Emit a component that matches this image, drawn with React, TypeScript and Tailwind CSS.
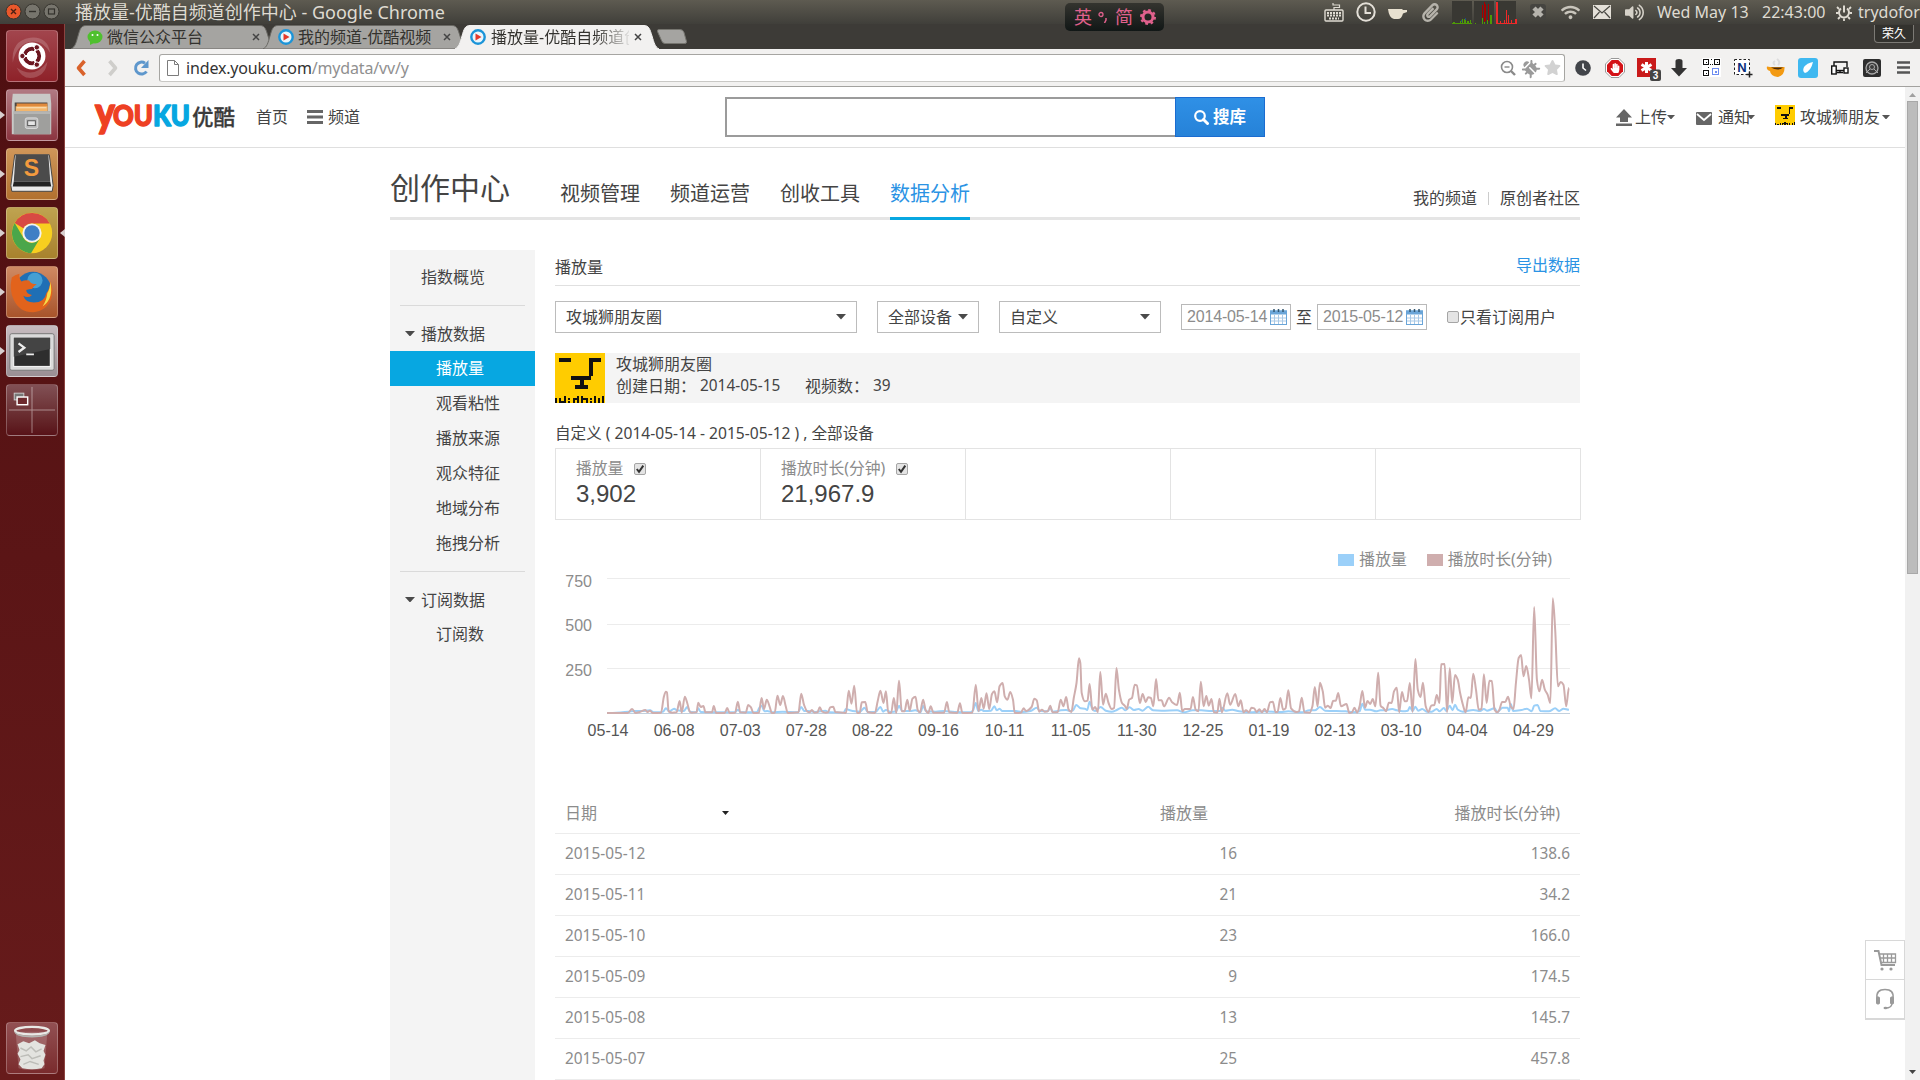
import React from 'react';
import { FaStar, FaBug, FaHandPaper, FaWifi, FaVolumeUp, FaPaperclip } from 'react-icons/fa';

/* ---------- chart data ---------- */

// Flat [x, height] pairs in one-third pixel heights, measured from the axis origin.
const MINUTES_FIRST = [
  195,0,255,0,268,12,278,0,290,3,306,9,313,3,320,7,328,0,352,1,360,48,366,64,369,62,374,5,385,1,397,2,406,36,412,1,421,49,428,30,435,5,440,1,455,2,460,31,467,18,475,21,481,2,500,2,505,21,512,0,537,0,544,15,551,0,567,1,575,34,582,2,598,1,605,24,613,17,620,0,636,1,644,45,651,12,659,40,667,20,674,0,682,1,690,52,698,24,706,51,714,20,720,0,751,2,759,58,767,25,777,4,783,2,790,9,797,1,806,2,813,17,820,4,830,1,837,2,843,17,852,19,858,3,880,1,889,0,897,67,905,28,913,82,921,0,929,1,935,32,945,33,952,3,973,0,981,35,989,67,998,30,1005,65,1012,0,1020,0,1028,45,1035,0,1043,97,1051,5,1059,5,1067,40,1074,7,1082,43,1091,49,1097,10,1104,2,1113,40,1120,10,1128,0,1135,20,1143,1,1174,1,1182,33,1189,2,1212,0,1220,29,1227,0,1256,1,1266,85,1274,5,1282,45,1289,13,1297,59,1305,12,1313,57,1320,65,1328,32,1335,80,1344,90,1350,50,1358,40,1366,63,1374,40,1379,0,1397,1,1405,14,1412,6,1428,18,1436,43,1443,38,1450,4,1458,10,1466,4,1475,5,1482,22,1489,2,1504,3,
];
const MINUTES_LAST = [
  2,40,10,20,18,48,25,10,33,3,40,45,48,90,55,164,59,150,63,60,72,35,80,37,86,87,94,10,102,18,110,2,117,123,125,25,133,58,141,30,150,12,157,15,164,135,171,70,180,30,188,22,194,12,201,40,209,45,217,85,223,83,232,30,240,57,249,33,256,47,264,45,271,20,279,102,286,38,295,38,302,20,317,46,325,33,340,24,348,61,355,5,362,12,379,12,386,48,394,10,402,5,409,94,417,20,425,51,432,22,440,42,447,2,457,1,463,43,470,2,486,59,494,25,509,57,518,20,525,38,533,2,540,8,549,2,556,16,564,14,571,3,579,11,586,2,594,12,601,2,610,32,618,34,626,3,632,4,640,45,648,10,655,14,663,68,671,14,686,3,694,5,702,46,710,2,725,1,733,20,740,78,748,20,755,91,763,65,770,16,778,22,786,15,793,36,801,37,808,60,816,20,832,27,840,0,848,2,855,16,863,1,870,20,878,66,886,16,893,36,901,27,908,42,916,20,924,121,931,22,940,14,947,5,955,31,963,30,970,65,978,76,985,2,993,63,1001,35,1008,36,1016,90,1024,3,1032,162,1039,70,1047,48,1054,91,1062,20,1070,3,1078,22,1087,24,1094,54,1102,30,1107,146,1117,147,1124,2,1132,134,1139,30,1147,114,1155,100,1162,60,1170,25,1178,2,1186,47,1193,45,1200,118,1208,70,1216,10,1224,12,1231,116,1239,30,1247,97,1254,96,1262,10,1270,2,1276,10,1284,33,1293,33,1301,49,1309,20,1317,12,1324,90,1332,165,1339,174,1346,110,1354,141,1362,100,1369,44,1377,318,1385,100,1392,65,1400,100,1408,70,1416,55,1424,30,1431,344,1438,250,1446,80,1454,93,1462,85,1470,20,1478,76,
];
const PLAYS_FIRST = [
  195,0,240,2,260,4,275,6,295,6,320,8,330,2,350,2,358,4,366,14,376,5,390,13,398,8,418,6,428,18,436,4,454,2,460,14,467,3,500,2,567,2,575,10,583,2,630,2,637,15,644,22,652,5,660,6,675,2,705,4,750,2,759,18,768,6,780,6,800,3,829,7,840,2,882,1,889,12,900,8,915,5,930,4,943,16,952,3,975,3,989,18,997,4,1005,9,1020,3,1035,5,1043,22,1052,6,1075,6,1090,8,1106,3,1113,22,1121,5,1150,4,1174,6,1205,3,1250,2,1258,8,1266,30,1273,6,1282,10,1290,6,1310,7,1320,20,1327,8,1335,13,1343,6,1380,6,1400,3,1425,6,1443,16,1452,6,1475,5,1482,16,1489,4,1504,6,
];
const PLAYS_LAST = [
  2,8,18,9,30,6,38,8,47,24,60,14,72,13,79,9,86,34,94,12,102,6,118,18,133,7,150,4,165,9,180,16,190,8,202,17,215,9,228,12,240,7,256,19,270,8,295,7,340,8,360,2,385,8,410,8,440,6,465,6,471,16,480,7,500,10,520,5,560,2,594,5,640,3,663,5,700,2,725,8,740,8,755,18,770,7,830,5,850,2,870,5,878,28,886,10,900,10,918,5,930,8,940,8,965,12,978,8,995,5,1010,7,1016,18,1024,6,1032,19,1040,7,1052,12,1065,4,1080,4,1094,12,1102,5,1115,15,1122,6,1132,22,1140,8,1147,25,1155,10,1170,4,1200,9,1220,6,1231,12,1240,7,1262,14,1270,3,1285,16,1300,16,1304,5,1309,27,1316,6,1340,9,1356,13,1370,5,1377,22,1387,24,1395,6,1420,5,1438,14,1450,6,1462,13,1478,10,
];

const BASELINE = 136;

function curve(first: number[], last: number[]): string {
  const pts: [number, number][] = [];
  for (let i = 0; i < first.length; i += 2) pts.push([(first[i] - 195) / 2.904, BASELINE - first[i + 1] / 3]);
  for (let i = 0; i < last.length; i += 2) pts.push([(last[i] + 1315.5) / 2.904, BASELINE - last[i + 1] / 3]);
  const slope = pts.map((p, i) => {
    if (i === 0 || i === pts.length - 1) return 0;
    const a = (p[1] - pts[i - 1][1]) / (p[0] - pts[i - 1][0]);
    const b = (pts[i + 1][1] - p[1]) / (pts[i + 1][0] - p[0]);
    return a * b <= 0 ? 0 : (2 * a * b) / (a + b);
  });
  let d = `M${pts[0][0]},${pts[0][1]}`;
  for (let i = 1; i < pts.length; i++) {
    const [x0, y0] = pts[i - 1];
    const [x1, y1] = pts[i];
    const h = (x1 - x0) / 3;
    d += `C${(x0 + h).toFixed(2)},${(y0 + slope[i - 1] * h).toFixed(2)} ${(x1 - h).toFixed(2)},${(y1 - slope[i] * h).toFixed(2)} ${x1.toFixed(2)},${y1.toFixed(2)}`;
  }
  return d;
}

const DAYS = ['05-14','06-08','07-03','07-28','08-22','09-16','10-11','11-05','11-30','12-25','01-19','02-13','03-10','04-04','04-29'];

const ROWS = [
  ['2015-05-12', '16', '138.6'],
  ['2015-05-11', '21', '34.2'],
  ['2015-05-10', '23', '166.0'],
  ['2015-05-09', '9', '174.5'],
  ['2015-05-08', '13', '145.7'],
  ['2015-05-07', '25', '457.8'],
];

/* ---------- small shared pieces ---------- */

function Caret({ w = 10, color = '#4a4a4a' }: { w?: number; color?: string }) {
  return (
    <svg width={w} height={w / 2 + 0.5} viewBox="0 0 10 5.5" className="shrink-0">
      <path d="M0 0h10L5 5.5z" fill={color} />
    </svg>
  );
}

function Avatar({ size }: { size: number }) {
  return (
    <svg width={size} height={size} viewBox="0 0 50 50" className="shrink-0" shapeRendering="crispEdges">
      <rect width="50" height="50" fill="#ffcc00" />
      <path d="M4 5h12v4H4zM34 5h12v4h-8v14h-2v4h-7v5h4v4H20v-4h5v-5h-9v-4h18z" fill="#111" />
      <path d="M0 45h2v5H0zM4 45h2v5H4zM6 48h3v2H6zM9 43h2v7H9zM13 45h2v2h-2zM13 48h2v2h-2zM18 45h5v2h-5zM18 45h2v5h-2zM22 43h2v7h-2zM26 43h2v7h-2zM28 45h4v2h-4zM31 45h2v5h-2zM35 45h2v2h-2zM35 48h2v2h-2zM39 43h2v7h-2zM43 45h2v5h-2zM47 43h2v7h-2z" fill="#111" />
    </svg>
  );
}

function Check({ on }: { on?: boolean }) {
  return (
    <svg width="12" height="12" viewBox="0 0 12 12" className="shrink-0">
      <rect x=".5" y=".5" width="11" height="11" rx="1.5" fill="#e4e4e4" stroke="#a5a5a5" />
      {on && <path d="M2.8 6l2.2 2.8L9.3 2.6" stroke="#333" strokeWidth="2" fill="none" />}
    </svg>
  );
}

function Calendar() {
  return (
    <svg width="17" height="16" viewBox="0 0 17 16" className="shrink-0">
      <rect x=".5" y="2" width="16" height="13.5" fill="#fff" stroke="#6aa5d8" />
      <rect x="0" y="1.5" width="17" height="4" fill="#6aa5d8" />
      <path d="M4.5 6v9M8.5 6v9M12.5 6v9M1 9h15M1 12h15" stroke="#a9c9e6" />
      <path d="M4 0v3M8.500 0v3M13 0v3" stroke="#33566f" strokeWidth="1.5" />
    </svg>
  );
}

/* ---------- desktop panel ---------- */

function TrayIcon({ children }: { children: React.ReactNode }) {
  return <span className="flex h-6 w-8 shrink-0 items-center justify-center text-[#dfdbd2]">{children}</span>;
}

function Panel() {
  return (
    <div className="flex h-6 w-full items-center bg-linear-to-b from-[#5e5b51] to-[#403f3a]">
      <svg width="64" height="24" viewBox="0 0 64 24" className="shrink-0">
        <circle cx="13.500" cy="11.500" r="7.500" fill="#e9582b" stroke="#37322c" />
        <path d="M11 9l5 5M16 9l-5 5" stroke="#4a2013" strokeWidth="1.4" />
        <circle cx="32.500" cy="11.500" r="7.500" fill="#77756d" stroke="#37352f" />
        <path d="M29 11.500h7" stroke="#33312c" strokeWidth="1.4" />
        <circle cx="51.500" cy="11.500" r="7.500" fill="#77756d" stroke="#37352f" />
        <rect x="48.500" y="9" width="6" height="5" fill="none" stroke="#33312c" strokeWidth="1.2" />
      </svg>
      <span className="ml-[11px] whitespace-nowrap text-[18px] leading-6 text-[#dfdbd2]">播放量-优酷自频道创作中心 - Google Chrome</span>
      <div className="ml-auto flex h-6 items-center">
        <TrayIcon>
          <svg width="20" height="20" viewBox="0 0 20 20" fill="none" stroke="#dfdbd2">
            <rect x="1" y="8" width="18" height="11" rx="1" strokeWidth="1.4" />
            <path d="M10 8V5.500h5.500V3H9V1" strokeWidth="1.2" />
            <path d="M3 11h14M3 13.500h14M5 16.500h10" strokeDasharray="2 1" strokeWidth="1.800" />
          </svg>
        </TrayIcon>
        <TrayIcon>
          <svg width="20" height="20" viewBox="0 0 20 20" fill="none" stroke="#e4e0d8" strokeWidth="2">
            <circle cx="10" cy="10" r="8.700" />
            <path d="M9.500 4.500V11H15" />
          </svg>
        </TrayIcon>
        <TrayIcon>
          <svg width="20" height="14" viewBox="0 0 20 14" className="mt-1">
            <path d="M0 2h14.500v1H19v2l-4 1.500Q13.500 12 10 12H6Q1 11 0 2z" fill="#e8e1d0" />
          </svg>
        </TrayIcon>
        <TrayIcon><FaPaperclip size={19} className="text-[#b6b3ab]" /></TrayIcon>
        <svg width="66" height="23" viewBox="0 0 66 23" className="ml-[6px] shrink-0" shapeRendering="crispEdges">
          <path d="M0 0h20v23H0zM22 0h20v23H22zM44 0h20v23H44z" fill="#393833" />
          <path d="M0 22h20v1H0zM1 21h2v1H1zM8 20h1v3H8zM10 18h1v5h-1zM12 18h2v5h-2zM15 20h2v3h-2zM18 19h1v4h-1z" fill="#4e9a06" />
          <path d="M9 19h1v2H9zM13 17h1v2h-1z" fill="#204a87" />
          <path d="M23 22h1v1h-1zM30 17h1v6h-1zM32 9h1v14h-1zM35 19h1v4h-1zM38 14h2v9h-2z" fill="#4e9a06" />
          <path d="M30 4h1v13h-1zM32 1h1v20h-1zM33 3h1v17h-1zM36 3h1v17h-1z" fill="#a40000" />
          <path d="M44 1h2v22h-2zM48 20h1v3h-1zM52 19h1v4h-1zM54 9h1v14h-1zM56 14h1v9h-1zM59 19h1v4h-1zM63 18h2v5h-2zM44 22h20v1H44z" fill="#ef2929" />
        </svg>
        <span className="w-1" />
        <TrayIcon>
          <svg width="16" height="16" viewBox="0 0 16 16">
            <rect width="16" height="16" rx="3" fill="#454440" />
            <path d="M4 4l8 8M12 4l-8 8" stroke="#b5b3ad" strokeWidth="4.500" />
          </svg>
        </TrayIcon>
        <TrayIcon><FaWifi size={19} className="text-[#c9c5bc]" /></TrayIcon>
        <TrayIcon>
          <svg width="18" height="14" viewBox="0 0 18 14">
            <rect width="18" height="14" fill="#e4e0d8" />
            <path d="M1 1l8 7 8-7M1 13l5.500-6M17 13l-5.500-6" stroke="#4a4943" strokeWidth="1.200" fill="none" />
          </svg>
        </TrayIcon>
        <TrayIcon><FaVolumeUp size={19} className="text-[#d5d1c8]" /></TrayIcon>
        <span className="ml-[7px] w-[105px] whitespace-nowrap text-[16px] leading-6 text-[#dfdbd2]">Wed May 13</span>
        <span className="w-[74px] text-[16px] leading-6 text-[#dfdbd2]">22:43:00</span>
        <svg width="16" height="17" viewBox="0 0 16 17" fill="none" stroke="#dfdbd2" className="shrink-0">
          <path d="M5 4.500a5 5 0 1 0 6 0M8 1.500v7" strokeWidth="2" />
          <path d="M1 3l2 2M15 3l-2 2M0 9h2.500M13.500 9H16M2 15l2-2M14 15l-2-2M8 14.500V17" strokeWidth="1.800" />
        </svg>
        <span className="ml-[6px] w-[62px] text-[16px] leading-6 text-[#dfdbd2]">trydofor</span>
      </div>
    </div>
  );
}

/* ---------- launcher ---------- */

function Tile({ color, running, focused, children }: { color: string; running?: boolean; focused?: boolean; children: React.ReactNode }) {
  return (
    <div className="flex h-[52px] w-[65px] shrink-0 items-center justify-between">
      <svg width="5" height="10" viewBox="0 0 5 10">{running && <path d="M0 1l5 4-5 4z" fill="#d8cfcf" />}</svg>
      <div className={`flex size-[52px] items-center justify-center overflow-hidden rounded-[4px] border border-white/25 ${color}`}>{children}</div>
      <svg width="6" height="10" viewBox="0 0 6 10">{focused && <path d="M6 1L1 5l5 4z" fill="#d8cfcf" />}</svg>
    </div>
  );
}

function Launcher() {
  return (
    <div className="flex w-[65px] shrink-0 flex-col gap-[7px] border-r border-[#8c4340] bg-linear-to-b from-[#4f0f11] to-[#671b1b] pt-[6px] pb-[6px]">
      <Tile color="bg-linear-to-b from-[#a2454d] to-[#8e2129]">
        <svg width="52" height="52" viewBox="0 0 52 52">
          <path d="M6 33Q4 10 24 7q18-2 21 16-7-13-19-12Q10 13 6 33zM10 38q18 13 32-6-2 16-18 17-9 0-14-11z" fill="#fff" opacity=".18" />
          <circle cx="26" cy="26" r="14" fill="#fff" />
          <circle cx="26" cy="26" r="7.500" fill="none" stroke="#6b1620" strokeWidth="4" />
          <path d="M26 26L15 26M26 26l5.500-9.500M26 26l5.500 9.500" stroke="#fff" strokeWidth="2" />
          <circle cx="26" cy="26" r="5.500" fill="#fff" />
          <g fill="#6b1620" stroke="#fff" strokeWidth="1"><circle cx="16" cy="26" r="2.800" /><circle cx="31" cy="17" r="2.800" /><circle cx="31" cy="35" r="2.800" /></g>
        </svg>
      </Tile>
      <Tile color="bg-linear-to-b from-[#b17a83] to-[#8b3440]" running>
        <svg width="52" height="52" viewBox="0 0 52 52">
          <path d="M6 4h39l1 10v32H5V14z" fill="#c9c9c7" />
          <rect x="8" y="13" width="34" height="10" fill="#4c4743" />
          <path d="M10 14h32v9H10z" fill="#e08a3c" /><path d="M9 17h33v6H9z" fill="#f3b66c" /><path d="M10 18h31v1H10z" fill="#fbe5c0" />
          <path d="M7 22h38v24H7z" fill="#9f9f9d" /><path d="M7 22h38v3H7z" fill="#b5b5b3" />
          <rect x="19" y="29" width="13" height="11" rx="2" fill="#bbb" stroke="#ddd" />
          <rect x="21.500" y="32" width="8" height="5" fill="#e6e6e6" stroke="#555" />
        </svg>
      </Tile>
      <Tile color="bg-linear-to-b from-[#cf9659] to-[#b2712f]" running>
        <svg width="52" height="52" viewBox="0 0 52 52">
          <path d="M8 6h36l4 32-1 6H5l-1-6z" fill="#e9e9e9" stroke="#444" strokeWidth="1" />
          <path d="M9 6h34l2 28H7z" fill="#4b4b4b" /><path d="M7 34h38l1 5H6z" fill="#222" />
          <text x="25.500" y="28" textAnchor="middle" fontFamily="Liberation Sans" fontWeight="700" fontSize="24" fill="#f39a3e">S</text>
        </svg>
      </Tile>
      <Tile color="bg-linear-to-b from-[#bfa350] to-[#a8822d]" running focused>
        <svg width="52" height="52" viewBox="0 0 52 52">
          <circle cx="26" cy="26" r="21" fill="#f7cf1f" />
          <path d="M8 15.500A21 21 0 0 1 44.500 16H26a10 10 0 0 0-9 5z" fill="#d84a43" />
          <path d="M8 15.500A21 21 0 0 0 25 47l9.200-15.200a10 10 0 0 1-17 -.5z" fill="#4ba64a" />
          <circle cx="26" cy="26" r="10" fill="#f2f2f2" /><circle cx="26" cy="26" r="8" fill="#3f7fc5" />
        </svg>
      </Tile>
      <Tile color="bg-linear-to-b from-[#cf8a63] to-[#a8542b]" running>
        <svg width="52" height="52" viewBox="0 0 52 52">
          <circle cx="27" cy="24" r="19" fill="#1f6fb5" /><circle cx="29" cy="14" r="8" fill="#55b4e0" opacity=".7" />
          <path d="M5 11q-3 13 2 23 6 13 20 13 14-1 19-14 3-9-1-18-1 9-4 12-2 10-13 10-9 0-11-7 5 3 9-1-6-1-6-5 3-1 6-1 1-3 5-5-6 0-8-4-4-1-8 1-3-4-2-8-5 1-8 4z" fill="#e2631c" />
          <path d="M45 15q4 18-8 26 4-6 5-14 3-5 3-12z" fill="#f6dc4a" />
        </svg>
      </Tile>
      <Tile color="bg-linear-to-b from-[#c7bcc0] to-[#9a8f94]" running>
        <svg width="52" height="52" viewBox="0 0 52 52">
          <rect x="3" y="8" width="46" height="38" rx="2" fill="#dadada" stroke="#777" />
          <rect x="7" y="12" width="38" height="30" fill="#2e2e2e" stroke="#fff" strokeWidth="1" />
          <path d="M7 12h38v12L7 32z" fill="#444" />
          <path d="M12 18l6 4.500-6 4.500" fill="none" stroke="#eee" strokeWidth="2.400" /><path d="M20 29.500h8" stroke="#eee" strokeWidth="2" />
        </svg>
      </Tile>
      <Tile color="bg-linear-to-b from-[#815055] to-[#581218]">
        <svg width="52" height="52" viewBox="0 0 52 52">
          <path d="M26 2v48M2 26h48" stroke="#fff" opacity=".45" />
          <rect x="7.500" y="8.500" width="10" height="7" fill="#777" stroke="#ccc" /><rect x="10.500" y="12.500" width="11" height="8" fill="#6d2a2e" stroke="#fff" strokeWidth="1.500" />
        </svg>
      </Tile>
      <div className="mt-auto">
        <Tile color="bg-linear-to-b from-[#925053] to-[#7a2b2d]">
          <svg width="52" height="52" viewBox="0 0 52 52">
            <path d="M9 9l3 38q13 4 27 0l3-38z" fill="#fff" opacity=".18" />
            <path d="M11 22l6-3 6 2 6-3 5 3 6 2-2 6 2 4-2 6 1 4-3 4q-10 2-20 0l-4-4 2-5-3-6 2-4z" fill="#e3e3df" />
            <path d="M14 26l6 3 5-4 5 5 6-3M14 35l8-2 4 4 9-3M17 43l7-3 9 3" stroke="#bdbdb8" strokeWidth="1.500" fill="none" />
            <ellipse cx="26" cy="8" rx="17.500" ry="4" fill="none" stroke="#e9e9e6" strokeWidth="2.500" />
            <path d="M8 8q1 5 18 5t18-5v2q-2 5-18 5T8 10z" fill="#b4b4b0" />
          </svg>
        </Tile>
      </div>
    </div>
  );
}

/* ---------- browser chrome ---------- */

function YoukuMark() {
  return (
    <svg width="16" height="16" viewBox="0 0 16 16" className="shrink-0">
      <circle cx="8" cy="8" r="6.700" fill="#e9f6fc" stroke="#1b94d8" strokeWidth="2.400" />
      <path d="M5.500 4.500l6 3.500-6 3.500z" fill="#e5392b" />
    </svg>
  );
}

function TabShape({ fill, stroke }: { fill: string; stroke: string }) {
  return (
    <svg width="204" height="24" viewBox="0 0 204 24" className="absolute top-0 left-0">
      <path d="M0 24C4 22 5 18 7 11S10 .5 15 .5H189c5 0 6 4 8 10.500S200 22 204 24z" fill={fill} stroke={stroke} />
    </svg>
  );
}

function CloseX() {
  return <svg width="8" height="8" viewBox="0 0 8 8" className="shrink-0"><path d="M1 1l6 6M7 1L1 7" stroke="#444" strokeWidth="1.500" /></svg>;
}

function TabStrip() {
  return (
    <div className="flex h-[25px] items-end bg-[#3d3b37] pl-[6px]">
      <div className="relative flex h-6 w-[192px] shrink-0 items-center pl-[16px]">
        <TabShape fill="#a5a4a1" stroke="#6a6964" />
        <svg width="16" height="15" viewBox="0 0 16 15" className="relative shrink-0">
          <ellipse cx="8" cy="7" rx="7.500" ry="6.500" fill="#4fc02e" /><path d="M3 11l0 4 4-2z" fill="#4fc02e" />
          <circle cx="5.500" cy="5" r="1" fill="#fff" /><circle cx="10.500" cy="5" r="1" fill="#fff" />
        </svg>
        <span className="relative ml-[4px] w-[145px] text-[16px] leading-6 text-[#33322e]">微信公众平台</span>
        <span className="relative"><CloseX /></span>
      </div>
      <div className="relative flex h-6 w-[192px] shrink-0 items-center pl-[15px]">
        <TabShape fill="#a5a4a1" stroke="#6a6964" />
        <span className="relative"><YoukuMark /></span>
        <span className="relative ml-[4px] w-[145px] whitespace-nowrap text-[16px] leading-6 text-[#33322e]">我的频道-优酷视频</span>
        <span className="relative"><CloseX /></span>
      </div>
      <div className="relative flex h-6 w-[202px] shrink-0 items-center pl-[15px]">
        <TabShape fill="#f2f1f0" stroke="#f2f1f0" />
        <span className="relative"><YoukuMark /></span>
        <span className="relative ml-[5px] w-[138px] overflow-hidden bg-linear-to-r from-[#33322e] from-75% to-[#33322e]/10 bg-clip-text whitespace-nowrap text-[16px] leading-6 text-transparent">播放量-优酷自频道创</span>
        <span className="relative ml-[5px]"><CloseX /></span>
      </div>
      <svg width="32" height="15" viewBox="0 0 32 15" className="mb-[5px] ml-[-1px]">
        <path d="M3 .5h21q3 0 4 3l2.500 9q.5 2-2 2H9q-2.500 0-3.500-3l-4-9q-.5-2 1.500-2z" fill="#a5a4a1" stroke="#76756f" />
      </svg>
      <span className="mr-[6px] mb-[6px] ml-auto flex h-[18px] w-[40px] items-center justify-center rounded-b-[4px] border border-t-0 border-[#7c7a75] bg-[#33322e] text-[12px] leading-none text-white">荣久</span>
    </div>
  );
}

function Ext({ children }: { children: React.ReactNode }) {
  return <span className="flex h-6 w-[32.1px] shrink-0 items-center justify-center">{children}</span>;
}

function Toolbar() {
  return (
    <div className="flex h-[38px] items-center border-b border-[#a3a29f] bg-[#f2f1f0]">
      <svg width="12" height="18" viewBox="0 0 12 18" className="ml-[10px]"><path d="M9.500 2L3.500 9l6 7" fill="none" stroke="#d9622b" strokeWidth="3.600" strokeLinejoin="round" /></svg>
      <svg width="12" height="18" viewBox="0 0 12 18" className="ml-[20px]"><path d="M2.500 2l6 7-6 7" fill="none" stroke="#cfcecb" strokeWidth="3.600" strokeLinejoin="round" /></svg>
      <svg width="18" height="18" viewBox="0 0 18 18" className="ml-[13px]">
        <path d="M14.500 12.500A6 6 0 1 1 13 4.200" fill="none" stroke="#5e97cc" strokeWidth="3" /><path d="M16.500 1v8H9z" fill="#5e97cc" />
      </svg>
      <div className="ml-[9px] flex h-[28px] w-[1406px] items-center rounded-[3px] border border-[#a6a5a2] border-b-[#c9c8c5] bg-white pl-[7px]">
        <svg width="12" height="16" viewBox="0 0 12 16"><path d="M.5.500h7l4 4v11H.5zM7.500.500v4h4" fill="#fff" stroke="#7c7c7c" /></svg>
        <span className="ml-[7px] text-[16px] leading-6 tracking-[-0.01em] text-[#333]">index.youku.com<span className="text-[#909090]">/mydata/vv/y</span></span>
        <div className="ml-auto flex items-center gap-[6px] pr-[3px]">
          <svg width="16" height="16" viewBox="0 0 16 16" fill="none" stroke="#8a8a8a"><circle cx="7" cy="7" r="5.500" strokeWidth="1.600" /><path d="M4.500 7h5" strokeWidth="1.400" /><path d="M11 11l4 4" strokeWidth="2.400" /></svg>
          <FaBug size={16} className="-rotate-45 text-[#9a9a9a]" />
          <FaStar size={17} className="text-[#d2d2d2]" />
        </div>
      </div>
      <div className="ml-[2px] flex">
        <Ext><svg width="16" height="16" viewBox="0 0 16 16"><circle cx="8" cy="8" r="7.800" fill="#42454a" /><path d="M8 3.500V8l3 2.500" fill="none" stroke="#fff" strokeWidth="1.600" /></svg></Ext>
        <Ext>
          <span className="relative flex size-5 items-center justify-center">
            <svg width="20" height="20" viewBox="0 0 20 20" className="absolute inset-0"><path d="M6 .5h8L19.500 6v8L14 19.500H6L.5 14V6z" fill="#fff" stroke="#999" /><path d="M6.700 2h6.600L18 6.700v6.600L13.300 18H6.700L2 13.300V6.700z" fill="#d41217" /></svg>
            <FaHandPaper size={10} className="relative text-white" />
          </span>
        </Ext>
        <Ext>
          <svg width="24" height="23" viewBox="0 0 24 23" className="mt-[3px] ml-[3px] shrink-0">
            <rect width="19" height="19" fill="#c91a1a" /><path d="M9.500 4v11M4.500 6.500l10 6M14.500 6.500l-10 6" stroke="#fff" strokeWidth="3" />
            <rect x="13" y="11.500" width="11" height="11.500" rx="2" fill="#444" />
            <text x="18.500" y="21" fontSize="10" fontWeight="700" fontFamily="Liberation Sans" textAnchor="middle" fill="#fff">3</text>
          </svg>
        </Ext>
        <Ext><svg width="16" height="18" viewBox="0 0 16 18"><path d="M4.500 2q0-2 3.500-2t3.500 2v7H16l-8 8.500L0 9h4.500z" fill="#333" /></svg></Ext>
        <Ext>
          <svg width="19" height="19" viewBox="0 0 19 19" shapeRendering="crispEdges">
            <rect width="19" height="19" fill="#fff" />
            <g fill="none" strokeWidth="1.500"><path d="M1.500 1.500h5v5h-5zM12.500 1.500h5v5h-5zM1.500 12.500h5v5h-5z" stroke="#111" /><path d="M10.500 10.500h6v6h-6z" stroke="#6d8cf0" /></g>
            <path d="M3.500 3.500h1.500v1.500H3.500zM14.500 3.500H16v1.500h-1.500zM3.500 14.500H5V16H3.500zM8 6h1v1H8zM10 6h1v1h-1zM6 9h1v1H6zM9 1h1v1H9z" fill="#111" /><path d="M12.500 12.500h2v2h-2z" fill="#6d8cf0" />
          </svg>
        </Ext>
        <Ext>
          <svg width="20" height="20" viewBox="0 0 20 20">
            <rect x="1.500" y="1.500" width="15" height="15" fill="#fff" stroke="#222" strokeDasharray="2.500 2" />
            <text x="9" y="13.500" fontSize="13" fontWeight="700" fontFamily="Liberation Sans" textAnchor="middle" fill="#0a2f7c">N</text>
            <path d="M16.500 13.500v6M13.500 16.500h6" stroke="#222" strokeWidth="1.500" />
          </svg>
        </Ext>
        <Ext>
          <svg width="20" height="20" viewBox="0 0 20 20">
            <path d="M4 9h14.500q.5 9-7 10-7-1-7.500-6Q0 12 1 8.500z" fill="#f39a12" /><path d="M5 9.500h12q-5 4-12 0z" fill="#4b2a0b" /><path d="M9 7q-3-2 0-4M12 7q3-3-1-6" fill="none" stroke="#ddd" strokeWidth="2" />
          </svg>
        </Ext>
        <Ext>
          <svg width="20" height="20" viewBox="0 0 20 20"><rect width="20" height="20" rx="3" fill="#3fb8f0" /><path d="M15 4q-2 9-8 11-3-2-1-6 3-4 9-5z" fill="#fff" /></svg>
        </Ext>
        <Ext>
          <svg width="18" height="14" viewBox="0 0 18 14" fill="none" stroke="#111" strokeWidth="1.400"><path d="M3 5V1h13v5M6 11.500h6M9 9.500v2" /><rect x=".7" y="5" width="4.500" height="8" fill="#fff" /><rect x="13" y="7" width="4" height="5" fill="#fff" /><path d="M5 9.500h8" /></svg>
        </Ext>
        <Ext>
          <svg width="18" height="18" viewBox="0 0 18 18"><rect width="18" height="18" rx="2" fill="#2e2e2e" /><circle cx="9" cy="9" r="6" fill="#3b3b3b" stroke="#aaa" strokeWidth="1.300" /><circle cx="9" cy="8" r="2.500" fill="none" stroke="#aaa" /><path d="M3 14l4-4M15 14l-4-4" stroke="#aaa" /></svg>
        </Ext>
        <Ext>
          <svg width="13" height="13" viewBox="0 0 13 13"><path d="M0 1.500h13M0 6.500h13M0 11.500h13" stroke="#555" strokeWidth="2.600" /></svg>
        </Ext>
      </div>
    </div>
  );
}

/* ---------- site ---------- */

function SiteHeader() {
  return (
    <header className="flex h-[61px] shrink-0 items-center border-b border-[#dfdfdf] bg-white">
      <svg width="142" height="40" viewBox="0 0 142 40" className="ml-[29px]" fontFamily="Lato" fontWeight="900" strokeLinejoin="round">
        <g fill="#ee4023" stroke="#ee4023" strokeWidth="1.400">
          <text x="1" y="29.500" fontSize="41" textLength="20" lengthAdjust="spacingAndGlyphs">y</text>
          <text x="19" y="29" fontSize="28" textLength="40" lengthAdjust="spacingAndGlyphs">OU</text>
        </g>
        <text x="59" y="29" fontSize="28" textLength="37" lengthAdjust="spacingAndGlyphs" fill="#06a7e1" stroke="#06a7e1" strokeWidth="1.400">KU</text>
        <text x="98" y="28" fontSize="21.500" fontWeight="500" fontFamily="Noto Sans CJK SC" fill="#3a3a3a" stroke="#3a3a3a" strokeWidth=".3">优酷</text>
      </svg>
      <span className="ml-[20px] text-[16px] text-[#444]">首页</span>
      <svg width="16" height="14" viewBox="0 0 16 14" className="ml-[19px]"><path d="M0 1.500h16M0 7h16M0 12.500h16" stroke="#666" strokeWidth="3" /></svg>
      <span className="ml-[5px] text-[16px] text-[#444]">频道</span>
      <div className="ml-[365px] flex h-10 w-[540px]">
        <div className="h-10 w-[450px] border-2 border-r-0 border-[#9b9b9b] bg-white" />
        <div className="flex h-10 w-[90px] items-center border border-[#1b6cd0] bg-linear-to-b from-[#2f90e6] to-[#2682d8] pl-[18px]">
          <svg width="15" height="15" viewBox="0 0 15 15" fill="none" stroke="#fff"><circle cx="6" cy="6" r="4.800" strokeWidth="2.200" /><path d="M9.500 9.500l4 4" strokeWidth="3" strokeLinecap="round" /></svg>
          <span className="ml-[4px] text-[16.500px] font-bold text-white">搜库</span>
        </div>
      </div>
      <div className="ml-[351px] flex items-center text-[16px] text-[#444]">
        <svg width="16" height="17" viewBox="0 0 16 17"><path d="M8 0l8 8.500h-4V13H4V8.500H0zM0 14.500h16V17H0z" fill="#666" /></svg>
        <span className="ml-[3px]">上传</span>
        <Caret w={8} color="#555" />
        <svg width="16" height="13" viewBox="0 0 16 13" className="mt-[2px] ml-[21px]"><rect width="16" height="13" rx="1" fill="#666" /><path d="M1 2l7 6 7-6" fill="none" stroke="#fff" strokeWidth="1.800" /></svg>
        <span className="mr-[-3px] ml-[6px]">通知</span>
        <Caret w={8} color="#555" />
        <span className="mb-[4px] ml-[20px]"><Avatar size={20} /></span>
        <span className="mr-[2px] ml-[5px]">攻城狮朋友</span>
        <Caret w={8} color="#555" />
      </div>
    </header>
  );
}

const NAV = ['视频管理', '频道运营', '创收工具'];

function CenterNav() {
  return (
    <div className="flex h-[72px] w-[1190px] border-b-[3px] border-[#e5e5e5] whitespace-nowrap">
      <span className="mt-[22px] w-[170px] text-[30px] leading-[36px] text-[#444]">创作中心</span>
      <div className="flex gap-[30px] pt-[30px] text-[20px] leading-[32px] text-[#444]">
        {NAV.map((n) => <span key={n} className="w-20">{n}</span>)}
        <span className="h-[42px] w-20 border-b-[3px] border-[#07a7e1] text-[#2b93e4]">数据分析</span>
      </div>
      <div className="ml-auto flex items-center pt-[31px] text-[16px] leading-6 text-[#444]">
        <span>我的频道</span>
        <span className="mx-[11px] h-[13px] w-px bg-[#ccc]" />
        <span>原创者社区</span>
      </div>
    </div>
  );
}

const PLAY_ITEMS = ['播放量', '观看粘性', '播放来源', '观众特征', '地域分布', '拖拽分析'];

function SideMenu() {
  return (
    <aside className="flex h-[830px] w-[145px] shrink-0 flex-col bg-[#f4f4f4] text-[16px] text-[#444]">
      <span className="mt-[10px] pl-[31px] leading-[35px]">指数概览</span>
      <div className="mt-[10px] ml-[10px] h-px w-[125px] bg-[#dadada]" />
      <div className="mt-[10px] flex h-[35px] items-center gap-[6px] pl-[15px]"><Caret /><span>播放数据</span></div>
      {PLAY_ITEMS.map((t, i) => (
        <span key={t} className={i === 0 ? 'bg-[#07a7e1] pl-[46px] leading-[35px] text-white' : 'pl-[46px] leading-[35px]'}>{t}</span>
      ))}
      <div className="mt-[10px] ml-[10px] h-px w-[125px] bg-[#dadada]" />
      <div className="mt-[10px] flex h-[35px] items-center gap-[6px] pl-[15px]"><Caret /><span>订阅数据</span></div>
      <span className="pl-[46px] leading-[35px]">订阅数</span>
    </aside>
  );
}

function DateBox({ value }: { value: string }) {
  return (
    <div className="flex h-[26px] w-[110px] items-center border border-[#b9b9b9] pl-[5px] font-['Liberation_Sans'] text-[16px] tracking-[-0.01em] text-[#8c8c8c]">
      <span className="w-[83px]">{value}</span><Calendar />
    </div>
  );
}

function Filters() {
  return (
    <div className="mt-[15px] flex h-8 items-center text-[16px] text-[#444]">
      <div className="flex h-8 w-[302px] items-center justify-between border border-[#bcbcbc] pr-[10px] pl-[10px]">攻城狮朋友圈<Caret /></div>
      <div className="ml-[20px] flex h-8 w-[102px] items-center justify-between border border-[#bcbcbc] pr-[10px] pl-[10px]">全部设备<Caret /></div>
      <div className="ml-[20px] flex h-8 w-[162px] items-center justify-between border border-[#bcbcbc] pr-[10px] pl-[10px]">自定义<Caret /></div>
      <div className="ml-[20px] flex items-center"><DateBox value="2014-05-14" /></div>
      <span className="ml-[5px] w-[21px]">至</span>
      <DateBox value="2015-05-12" />
      <span className="ml-[20px]"><Check /></span>
      <span className="ml-[1px]">只看订阅用户</span>
    </div>
  );
}

function Stats() {
  return (
    <div className="grid h-[72px] w-[1026px] grid-cols-5 border border-r-0 border-[#e3e3e3]">
      {[['播放量', '3,902'], ['播放时长(分钟)', '21,967.9'], null, null, null].map((s, i) => (
        <div key={i} className="border-r border-[#e3e3e3] pt-[8px] pl-[20px]">
          {s && (
            <>
              <div className="flex h-6 items-center gap-[11px] text-[15.800px] text-[#8c8c8c]"><span>{s[0]}</span><Check on /></div>
              <div className="font-['Liberation_Sans'] text-[24px] leading-[26px] text-[#444]">{s[1]}</div>
            </>
          )}
        </div>
      ))}
    </div>
  );
}

function Chart() {
  return (
    <div className="mt-[25px] w-[1025px]">
      <div className="flex h-[30px] items-center justify-end gap-[20px] pr-[28px] text-[15.800px] text-[#8c8c8c]">
        <span className="flex items-center gap-[5px]"><i className="h-3 w-4 bg-[#9bd0f9]" />播放量</span>
        <span className="flex items-center gap-[5px]"><i className="h-3 w-4 bg-[#cfaeae]" />播放时长(分钟)</span>
      </div>
      <div className="mt-[2px] flex">
        <div className="flex w-[37px] flex-col pt-[-8px] text-right font-['Liberation_Sans'] text-[16px] text-[#8c8c8c]">
          <span className="h-[44px] leading-[10px]">750</span>
          <span className="h-[45px] leading-[10px]">500</span>
          <span className="leading-[10px]">250</span>
        </div>
        <svg width="964" height="140" viewBox="0 0 964 140" className="ml-[15px]">
          <path d="M0 1.500h963M0 47.500h963M0 91.500h963" stroke="#ececec" />
          <path d="M0 136.500h963" stroke="#c3d0dd" />
          <path d={curve(PLAYS_FIRST, PLAYS_LAST)} fill="none" stroke="#9bd0f9" strokeWidth="2" />
          <path d={curve(MINUTES_FIRST, MINUTES_LAST)} fill="none" stroke="#cfaeae" strokeWidth="2" />
        </svg>
      </div>
      <div className="mt-[4px] ml-[20px] flex font-['Liberation_Sans'] text-[16px] leading-5 text-[#555]">
        {DAYS.map((d) => <span key={d} className="w-[66.1px] shrink-0 text-center">{d}</span>)}
      </div>
    </div>
  );
}

function Table() {
  return (
    <div className="mt-[51px] w-[1025px] text-[15.400px] text-[#8c8c8c]">
      <div className="flex h-[42px] items-center border-b border-[#ececec] text-[16px]">
        <span className="w-[167px] pl-[10px]">日期</span>
        <Caret w={7} color="#222" />
        <span className="ml-auto w-[200px] pr-[10px] text-right">播放量</span>
        <span className="w-[342px] pr-0 text-right">播放时长(分钟)</span>
        <span className="w-5" />
      </div>
      {ROWS.map((r) => (
        <div key={r[0]} className="flex h-[41px] items-center border-b border-[#ececec]">
          <span className="w-[300px] pl-[10px]">{r[0]}</span>
          <span className="ml-auto w-[200px] text-right">{r[1]}</span>
          <span className="w-[343px] pr-[10px] text-right">{r[2]}</span>
        </div>
      ))}
    </div>
  );
}

function Page() {
  return (
    <main className="flex min-h-0 grow flex-col pl-[325px]">
      <CenterNav />
      <div className="mt-[30px] flex">
        <SideMenu />
        <section className="ml-[20px] w-[1026px] shrink-0 text-[#444]">
          <div className="flex h-[36px] w-[1025px] justify-between border-b border-[#e0e0e0] text-[16px]">
            <span className="leading-[35px]">播放量</span>
            <span className="leading-[30px] text-[#2b93e4]">导出数据</span>
          </div>
          <Filters />
          <div className="mt-[20px] flex h-[50px] w-[1025px] bg-[#f4f4f4]">
            <Avatar size={50} />
            <div className="ml-[11px] text-[16px] leading-[22px]">
              <div>攻城狮朋友圈</div>
              <div className="flex"><span className="w-[84px]">创建日期：</span><span className="w-[105px] text-[15.400px]">2014-05-15</span><span className="w-[68px]">视频数：</span><span className="text-[15.400px]">39</span></div>
            </div>
          </div>
          <div className="mt-[18px] h-[27px] text-[15.600px] leading-6">自定义 ( 2014-05-14 - 2015-05-12 ) , 全部设备</div>
          <Stats />
          <Chart />
          <Table />
        </section>
      </div>
    </main>
  );
}

function FloatTools() {
  return (
    <div className="absolute top-[940px] left-[1865px] flex h-20 w-10 flex-col border border-b-2 border-[#d8d8d8] bg-white">
      <div className="flex h-[39px] items-center justify-center border-b border-[#d8d8d8]">
        <svg width="24" height="22" viewBox="0 0 24 22" fill="none" stroke="#9a9a9a">
          <path d="M1 2h4.500l3 14H22" strokeWidth="2" /><path d="M6 5h16.500v8.500H8M7 9h15M10.500 5v9M14.500 5v9M18.500 5v9" strokeWidth="1.300" />
          <circle cx="9" cy="20" r="1.600" fill="#9a9a9a" stroke="none" /><circle cx="18" cy="20" r="1.600" fill="#9a9a9a" stroke="none" />
        </svg>
      </div>
      <div className="flex grow items-center justify-center">
        <svg width="20" height="22" viewBox="0 0 20 22" fill="none" stroke="#9a9a9a">
          <path d="M2 10Q1 1.500 10 1.500T18 10" strokeWidth="1.600" /><rect x="1.500" y="9" width="3" height="7" rx="1" fill="#9a9a9a" /><rect x="15.500" y="9" width="3" height="7" rx="1" fill="#9a9a9a" /><path d="M17 16q-1 4-6 4" strokeWidth="1.300" /><ellipse cx="10.500" cy="20" rx="2" ry="1.300" fill="#9a9a9a" stroke="none" />
        </svg>
      </div>
    </div>
  );
}

function InputMethodBar() {
  return (
    <div className="absolute top-[3px] left-[1065px] flex h-7 w-[99px] items-center rounded-[5px] bg-linear-to-b from-[#34342f] to-[#111716] pl-[9px] text-[18px] text-[#e0618d]">
      <span>英</span>
      <svg width="10" height="12" viewBox="0 0 10 12" fill="none" stroke="#e0618d" className="ml-[6px]"><circle cx="3" cy="3.500" r="2" strokeWidth="1.300" /><path d="M8 7v2l-1.500 3" strokeWidth="1.500" /></svg>
      <span className="ml-[7px]">简</span>
      <svg width="16" height="16" viewBox="0 0 16 16" fill="none" stroke="#e0618d" className="ml-[7px]"><circle cx="8" cy="8" r="5" strokeWidth="3" /><circle cx="8" cy="8" r="7" strokeWidth="2" strokeDasharray="2.750 2.750" /></svg>
    </div>
  );
}

export default function App() {
  return (
    <div className="relative flex h-[1080px] w-[1920px] flex-col overflow-hidden bg-white font-['Noto_Sans','Noto_Sans_CJK_SC',sans-serif]">
      <Panel />
      <div className="flex min-h-0 grow">
        <Launcher />
        <div className="flex min-w-0 grow flex-col">
          <TabStrip />
          <Toolbar />
          <div className="flex min-h-0 grow">
            <div className="flex min-w-0 grow flex-col overflow-hidden">
              <SiteHeader />
              <Page />
            </div>
            <div className="flex w-[15px] shrink-0 flex-col items-center bg-[#f1f1f1] py-[6px]">
              <span className="rotate-180"><Caret w={7} color="#a0a0a0" /></span>
              <div className="mt-[4px] h-[473px] w-[11px] border border-[#a8a8a8] bg-[#bcbcbc]" />
              <span className="mt-auto"><Caret w={7} color="#444" /></span>
            </div>
          </div>
        </div>
      </div>
      <FloatTools />
      <InputMethodBar />
    </div>
  );
}
